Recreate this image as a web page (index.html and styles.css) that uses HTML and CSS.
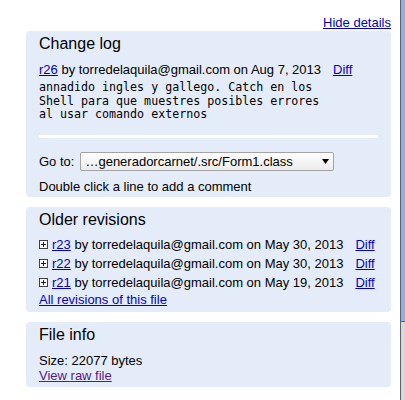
FILE: index.html
```html
<!DOCTYPE html>
<html>
<head>
<meta charset="utf-8">
<link rel="stylesheet" href="styles.css">
</head>
<body>
<div class="layout">
  <div class="main">
    <div class="hide"><a href="#">Hide details</a></div>

    <div class="panel changelog">
      <div class="title">Change log</div>
      <div class="revline"><a href="#">r26</a> by torredelaquila@gmail.com on Aug 7, 2013<a class="diff" href="#">Diff</a></div>
      <pre class="msg">annadido ingles y gallego. Catch en los
Shell para que muestres posibles errores
al usar comando externos</pre>
      <div class="sep"></div>
      <div class="goto">
        <span>Go to:</span>
        <span class="select-wrap">
          <select class="select"><option>…generadorcarnet/.src/Form1.class</option></select>
          <svg class="arrow" width="7" height="5" viewBox="0 0 7 5"><path d="M0 0H7L3.5 5Z" fill="#000"/></svg>
        </span>
      </div>
      <div class="hint">Double click a line to add a comment</div>
    </div>

    <div class="panel older">
      <div class="title">Older revisions</div>
      <div class="rows">
        <div class="row">
          <svg class="plus" width="9" height="9" viewBox="0 0 9 9"><rect x="0.5" y="0.5" width="8" height="8" fill="#fff" stroke="#3a3f4a"/><path d="M2 4.5H7M4.5 2V7" stroke="#1a1f2a"/></svg>
          <span><a href="#">r23</a> by torredelaquila@gmail.com on May 30, 2013</span><a class="diff" href="#">Diff</a>
        </div>
        <div class="row">
          <svg class="plus" width="9" height="9" viewBox="0 0 9 9"><rect x="0.5" y="0.5" width="8" height="8" fill="#fff" stroke="#3a3f4a"/><path d="M2 4.5H7M4.5 2V7" stroke="#1a1f2a"/></svg>
          <span><a href="#">r22</a> by torredelaquila@gmail.com on May 30, 2013</span><a class="diff" href="#">Diff</a>
        </div>
        <div class="row">
          <svg class="plus" width="9" height="9" viewBox="0 0 9 9"><rect x="0.5" y="0.5" width="8" height="8" fill="#fff" stroke="#3a3f4a"/><path d="M2 4.5H7M4.5 2V7" stroke="#1a1f2a"/></svg>
          <span><a href="#">r21</a> by torredelaquila@gmail.com on May 19, 2013</span><a class="diff" href="#">Diff</a>
        </div>
      </div>
      <div class="all"><a href="#">All revisions of this file</a></div>
    </div>

    <div class="panel fileinfo">
      <div class="title">File info</div>
      <div class="size">Size: 22077 bytes</div>
      <div><a class="visited" href="#">View raw file</a></div>
    </div>
  </div>
  <div class="strip">
    <div class="strip-top"></div>
    <div class="strip-bottom"></div>
  </div>
</div>
</body>
</html>
```
FILE: styles.css
```css
html, body {
  margin: 0;
  padding: 0;
  background: #fff;
}
body {
  font-family: Arial, "Liberation Sans", sans-serif;
  font-size: 13px;
  line-height: 15px;
  color: #000;
}
a {
  color: #0000cc;
  text-decoration: underline;
}
a.visited {
  color: #551a8b;
}
.layout {
  display: flex;
  height: 400px;
  overflow: hidden;
}
.main {
  width: 400px;
  box-sizing: border-box;
  padding: 15px 9px 0 26px;
}
.hide {
  text-align: right;
  margin-bottom: 1px;
}
.panel {
  background: #e5ecf9;
  border-radius: 4px;
  padding: 3px 13px 3px 13px;
  margin-bottom: 10px;
}
.title {
  font-size: 16px;
  line-height: 19px;
}
.diff {
  margin-left: 12px;
}
.changelog .revline {
  margin-top: 9px;
}
.msg {
  margin: 4px 0 0 0;
  font-family: "DejaVu Sans Mono", monospace;
  font-size: 11.65px;
  line-height: 13.5px;
}
.sep {
  height: 3px;
  background: #fff;
  margin-top: 13.5px;
}
.goto {
  display: flex;
  align-items: center;
  margin-top: 14px;
  height: 19px;
}
.select-wrap {
  position: relative;
  display: inline-block;
  margin-left: 6px;
  height: 19px;
}
.select {
  -webkit-appearance: none;
  appearance: none;
  display: block;
  width: 254px;
  height: 19px;
  margin: 0;
  padding: 0 0 0 4px;
  box-sizing: border-box;
  border: 1px solid #a3a3a3;
  border-radius: 2px;
  background: linear-gradient(#ffffff, #ebebeb);
  font-family: Arial, "Liberation Sans", sans-serif;
  font-size: 13px;
  line-height: 17px;
  color: #000;
}
.arrow {
  position: absolute;
  right: 5px;
  top: 7px;
}
.hint {
  margin-top: 8px;
}
.older .rows {
  margin-top: 6px;
}
.row {
  display: flex;
  align-items: center;
  height: 19px;
}
.plus {
  margin-right: 4px;
  flex: none;
}
.older {
  padding-bottom: 5px;
}
.fileinfo {
  padding-bottom: 4px;
}
.size {
  margin-top: 9px;
}
.strip {
  width: 5px;
  display: flex;
  flex-direction: column;
  border-left: 1px solid #5b6370;
  box-sizing: border-box;
}
.strip-top {
  height: 322px;
  background: #8db3e2;
  border-bottom: 1px solid #5b6370;
  box-sizing: border-box;
}
.strip-bottom {
  flex: 1;
  background: #d9d9d9;
}
```
